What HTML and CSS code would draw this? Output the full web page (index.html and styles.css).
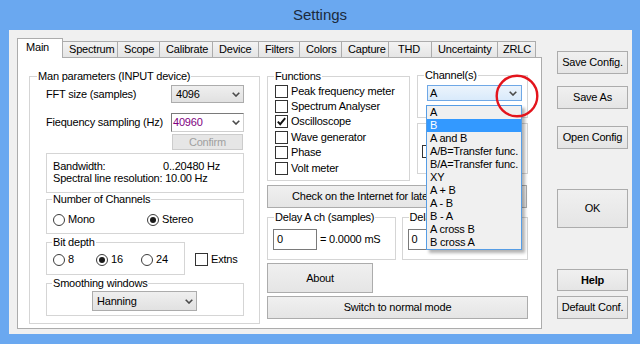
FILE: index.html
```html
<!DOCTYPE html>
<html lang="en">
<head>
	<meta charset="UTF-8">
	<title>Settings</title>
	<link rel="stylesheet" href="styles.css">
</head>
<body>
	<div class="window">
		<div class="titlebar">Settings</div>
		<div class="client">
			<div class="tabctrl">
				<ul class="tabs">
					<li class="active">Main</li>
					<li>Spectrum</li>
					<li>Scope</li>
					<li>Calibrate</li>
					<li>Device</li>
					<li>Filters</li>
					<li>Colors</li>
					<li>Capture</li>
					<li>THD</li>
					<li>Uncertainty</li>
					<li>ZRLC</li>
				</ul>
				<div class="panel">
					<!-- left: input device -->
					<fieldset class="grp main-grp">
						<legend>Man parameters (INPUT device)</legend>
						<div class="main-body">
							<div class="row fft">
								<span>FFT size (samples)</span>
								<div class="combo">4096<svg class="arr" width="8" height="5" viewBox="0 0 8 5"><polyline points="0.7,0.7 4,4 7.3,0.7" fill="none" stroke="#4a4a4a" stroke-width="1.6"/></svg></div>
							</div>
							<div class="row freq">
								<span>Fiequency sampling (Hz)</span>
								<div class="combo edit">40960<svg class="arr" width="8" height="5" viewBox="0 0 8 5"><polyline points="0.7,0.7 4,4 7.3,0.7" fill="none" stroke="#4a4a4a" stroke-width="1.6"/></svg></div>
							</div>
							<button class="btn confirm" disabled>Confirm</button>
							<div class="info">
								<div><span class="info-key">Bandwidth:</span>0..20480 Hz</div>
								<div>Spectral line resolution: 10.00 Hz</div>
							</div>
							<fieldset class="grp sub chans">
								<legend>Number of Channels</legend>
								<div class="opts">
									<span class="opt"><span class="radio"></span>Mono</span>
									<span class="opt"><span class="radio on"></span>Stereo</span>
								</div>
							</fieldset>
							<div class="bit-row">
								<fieldset class="grp sub bits">
									<legend>Bit depth</legend>
									<div class="opts">
										<span class="opt"><span class="radio"></span>8</span>
										<span class="opt"><span class="radio on"></span>16</span>
										<span class="opt"><span class="radio"></span>24</span>
									</div>
								</fieldset>
								<span class="opt extns"><span class="check"></span>Extns</span>
							</div>
							<fieldset class="grp sub smooth">
								<legend>Smoothing windows</legend>
								<div class="combo hanning">Hanning<svg class="arr" width="8" height="5" viewBox="0 0 8 5"><polyline points="0.7,0.7 4,4 7.3,0.7" fill="none" stroke="#4a4a4a" stroke-width="1.6"/></svg></div>
							</fieldset>
						</div>
					</fieldset>

					<!-- middle: functions, channels, delays -->
					<div class="mid">
						<div class="top-row">
							<fieldset class="grp funcs">
								<legend>Functions</legend>
								<span class="fn"><span class="check"></span>Peak frequency meter</span>
								<span class="fn"><span class="check"></span>Spectrum Analyser</span>
								<span class="fn"><span class="check"><svg width="11" height="11" viewBox="0 0 11 11"><polyline points="1.8,5.6 4.2,8.2 9.2,2.2" fill="none" stroke="#111" stroke-width="1.9"/></svg></span>Oscilloscope</span>
								<span class="fn"><span class="check"></span>Wave generator</span>
								<span class="fn"><span class="check"></span>Phase</span>
								<span class="fn"><span class="check"></span>Volt meter</span>
							</fieldset>
							<div class="chan-col">
								<fieldset class="grp chan">
									<legend>Channel(s)</legend>
									<div class="combo focus">A<svg class="arr" width="8" height="5" viewBox="0 0 8 5"><polyline points="0.7,0.7 4,4 7.3,0.7" fill="none" stroke="#4a4a4a" stroke-width="1.6"/></svg>
										<ul class="droplist">
											<li>A</li>
											<li class="sel">B</li>
											<li>A and B</li>
											<li>A/B=Transfer func.</li>
											<li>B/A=Transfer func.</li>
											<li>XY</li>
											<li>A + B</li>
											<li>A - B</li>
											<li>B - A</li>
											<li>A cross B</li>
											<li>B cross A</li>
										</ul>
									</div>
								</fieldset>
								<fieldset class="grp other">
									<span class="check"></span>
								</fieldset>
							</div>
						</div>
						<button class="btn check-btn">Check on the Internet for latest version</button>
						<div class="delay-row">
							<fieldset class="grp delay">
								<legend>Delay A ch (samples)</legend>
								<div class="delay-body"><span class="edit-box">0</span>= 0.0000 mS</div>
							</fieldset>
							<fieldset class="grp delay b">
								<legend>Delay B ch (samples)</legend>
								<div class="delay-body"><span class="edit-box">0</span>= 0.0000 mS</div>
							</fieldset>
						</div>
						<button class="btn about">About</button>
						<button class="btn switch">Switch to normal mode</button>
					</div>
				</div>
			</div>

			<div class="side">
				<button class="btn">Save Config.</button>
				<button class="btn save-as">Save As</button>
				<button class="btn open">Open Config</button>
				<button class="btn ok">OK</button>
				<button class="btn help">Help</button>
				<button class="btn default">Default Conf.</button>
			</div>
		</div>

		<svg class="mark" width="44" height="44" viewBox="0 0 44 44"><circle cx="22" cy="22" r="20.3" fill="none" stroke="#e3141c" stroke-width="2.4"/></svg>
	</div>
</body>
</html>
```

FILE: styles.css
```css
*{
	margin: 0;
	padding: 0;
	box-sizing: border-box;
}
body{
	background: #6aa8f0;
	font-family: "Liberation Sans", Arial, sans-serif;
	font-size: 11px;
	line-height: 13px;
	letter-spacing: -0.2px;
	color: #000;
}
.window{
	position: relative;
	width: 640px;
	height: 344px;
	background: #6aa8f0;
}
.titlebar{
	height: 30px;
	padding-top: 6px;
	text-align: center;
	font-size: 15px;
	line-height: 17px;
	letter-spacing: 0;
	color: #1b2a3c;
}
.client{
	display: flex;
	height: 304px;
	margin: 0 8px 0 9px;
	background: #f0f0f0;
}

/* tabs */
.tabctrl{
	width: 525px;
	margin: 8px 0 0 8px;
}
.tabs{
	display: flex;
	align-items: flex-end;
	height: 19px;
	list-style: none;
}
.tabs li{
	height: 16px;
	margin-left: -1px;
	padding-left: 6px;
	border: 1px solid #acacac;
	border-bottom: 0;
	background: linear-gradient(#f3f3f3, #e5e5e5);
	line-height: 15px;
	white-space: nowrap;
}
.tabs .active{
	position: relative;
	z-index: 1;
	height: 20px;
	margin: 0 0 -1px 0;
	padding-left: 8px;
	background: #fff;
	line-height: 17px;
}
.tabs li:nth-child(1){ width: 46px; }
.tabs li:nth-child(2){ width: 56px; }
.tabs li:nth-child(3){ width: 43px; }
.tabs li:nth-child(4){ width: 54px; }
.tabs li:nth-child(5){ width: 47px; }
.tabs li:nth-child(6){ width: 42px; }
.tabs li:nth-child(7){ width: 43px; }
.tabs li:nth-child(8){ width: 48px; }
.tabs li:nth-child(9){ width: 44px; padding-left: 9px; }
.tabs li:nth-child(10){ width: 67px; }
.tabs li:nth-child(11){ width: 39px; padding-left: 5px; }
.panel{
	display: flex;
	align-items: flex-start;
	height: 272px;
	padding: 12px 0 0 11px;
	border: 1px solid #acacac;
	background: #fff;
}

/* group boxes */
.grp{
	min-width: 0;
	border: 1px solid #d5d5d5;
}
.grp legend{
	margin-left: 6px;
	padding: 0 1px;
	line-height: 13px;
}
.main-grp{
	width: 231px;
	height: 254px;
}
.main-grp > legend{
	margin-left: 7px;
}
.main-body{
	padding: 0 15px 0 16px;
}
.row{
	display: flex;
	align-items: center;
	justify-content: space-between;
}
.fft{
	height: 18px;
	margin-top: 2px;
}
.freq{
	height: 19px;
	margin-top: 10px;
}
.combo{
	display: flex;
	align-items: center;
	justify-content: space-between;
	width: 73px;
	height: 100%;
	padding: 0 3px 0 4px;
	border: 1px solid #acacac;
	background: linear-gradient(#efefef, #e1e1e1);
}
.combo.edit{
	padding-left: 1px;
	border-color: #7a7a7a #cfcfcf #cfcfcf #7a7a7a;
	background: #fff;
	color: #800080;
}
.arr{
	flex: none;
}
.btn{
	display: block;
	font: inherit;
	letter-spacing: inherit;
	color: #000;
	text-align: center;
	border: 1px solid #acacac;
	background: linear-gradient(#f0f0f0, #e5e5e5);
}
.confirm{
	width: 71px;
	height: 16px;
	margin: 2px 1px 0 auto;
	color: #a0a0a0;
	border-color: #cccccc;
	background: #e6e6e6;
}
.info{
	height: 40px;
	margin-top: 3px;
	padding: 6px 0 0 6px;
	border: 1px solid #d5d5d5;
	line-height: 12px;
}
.info-key{
	display: inline-block;
	width: 110px;
}
.sub legend{
	margin-left: 5px;
}
.chans{
	height: 41px;
}
.opts{
	display: flex;
	align-items: center;
	height: 13px;
	padding-left: 6px;
}
.chans .opts{
	margin-top: 7px;
}
.chans .opt{
	width: 94px;
}
.bit-row{
	display: flex;
	align-items: flex-start;
	margin-top: 2px;
}
.bits{
	width: 139px;
	height: 39px;
}
.bits .opts{
	margin-top: 4px;
}
.bits .opt{
	width: 46px;
}
.bits .opt:nth-child(2){
	width: 48px;
}
.extns{
	margin: 17px 0 0 10px;
}
.smooth{
	height: 39px;
	margin-top: 2px;
}
.combo.hanning{
	width: 105px;
	height: 20px;
	margin: 1px 0 0 45px;
}

/* radio / check */
.opt{
	display: flex;
	align-items: center;
	gap: 3px;
	height: 13px;
}
.radio{
	display: flex;
	align-items: center;
	justify-content: center;
	flex: none;
	width: 12px;
	height: 12px;
	border: 1px solid #3c3c3c;
	border-radius: 50%;
	background: #fff;
}
.radio.on::after{
	content: "";
	width: 6px;
	height: 6px;
	border-radius: 50%;
	background: #1a1a1a;
}
.check{
	display: block;
	flex: none;
	width: 13px;
	height: 13px;
	border: 1px solid #333;
	background: #fff;
}
.check svg{
	display: block;
}

/* middle column */
.mid{
	width: 261px;
	margin-left: 7px;
}
.top-row{
	display: flex;
	align-items: flex-start;
}
.funcs{
	width: 143px;
	height: 111px;
}
.fn{
	display: flex;
	align-items: center;
	gap: 3px;
	height: 15.4px;
	padding-left: 7px;
}
.fn:first-of-type{
	margin-top: 0.5px;
}
.chan-col{
	width: 111px;
	margin: -1px 0 0 7px;
}
.chan{
	height: 49px;
}
.combo.focus{
	position: relative;
	width: 95px;
	height: 16px;
	margin: 3px 0 0 9px;
	padding: 0 4px 0 2px;
	border-color: #6fa8e6;
	background: linear-gradient(#ecf4fc, #d9eafb);
}
.droplist{
	position: absolute;
	left: -2px;
	top: 19px;
	z-index: 3;
	width: 96px;
	list-style: none;
	border: 1px solid #569de5;
	background: #f0f0f0;
	box-shadow: 3px 3px 3px rgba(0,0,0,0.3);
}
.droplist li{
	height: 13px;
	padding-left: 3px;
	line-height: 13px;
	white-space: nowrap;
}
.droplist .sel{
	background: #3399ff;
	color: #fff;
}
.other{
	height: 51px;
	margin-top: 5px;
	padding: 21px 0 0 4px;
}
.check-btn{
	width: 260px;
	height: 23px;
	margin-top: 4px;
	padding-left: 24px;
	text-align: left;
	white-space: nowrap;
}
.delay-row{
	display: flex;
	margin-top: 3px;
}
.delay{
	width: 129px;
	height: 49px;
}
.delay.b{
	width: 127px;
	margin-left: 6px;
}
.delay-body{
	display: flex;
	align-items: center;
	gap: 3px;
	height: 21px;
	margin: 5px 0 0 5px;
	white-space: nowrap;
}
.edit-box{
	flex: none;
	width: 44px;
	height: 21px;
	padding-left: 3px;
	border: 1px solid #7a7a7a;
	background: #fff;
	line-height: 19px;
}
.about{
	width: 106px;
	height: 30px;
	margin-top: 3px;
}
.switch{
	width: 261px;
	height: 23px;
	margin-top: 3px;
}

/* right buttons */
.side{
	width: 71px;
	margin-left: 15px;
	padding-top: 21px;
}
.side .btn{
	width: 71px;
	height: 23px;
	white-space: nowrap;
}
.side .save-as{ margin-top: 12px; }
.side .open{ margin-top: 17px; }
.side .ok{ height: 39px; margin-top: 40px; }
.side .help{ height: 22px; margin-top: 41px; font-weight: bold; }
.side .default{ margin-top: 5px; }

.mark{
	position: absolute;
	left: 495px;
	top: 74px;
	z-index: 5;
}
```
